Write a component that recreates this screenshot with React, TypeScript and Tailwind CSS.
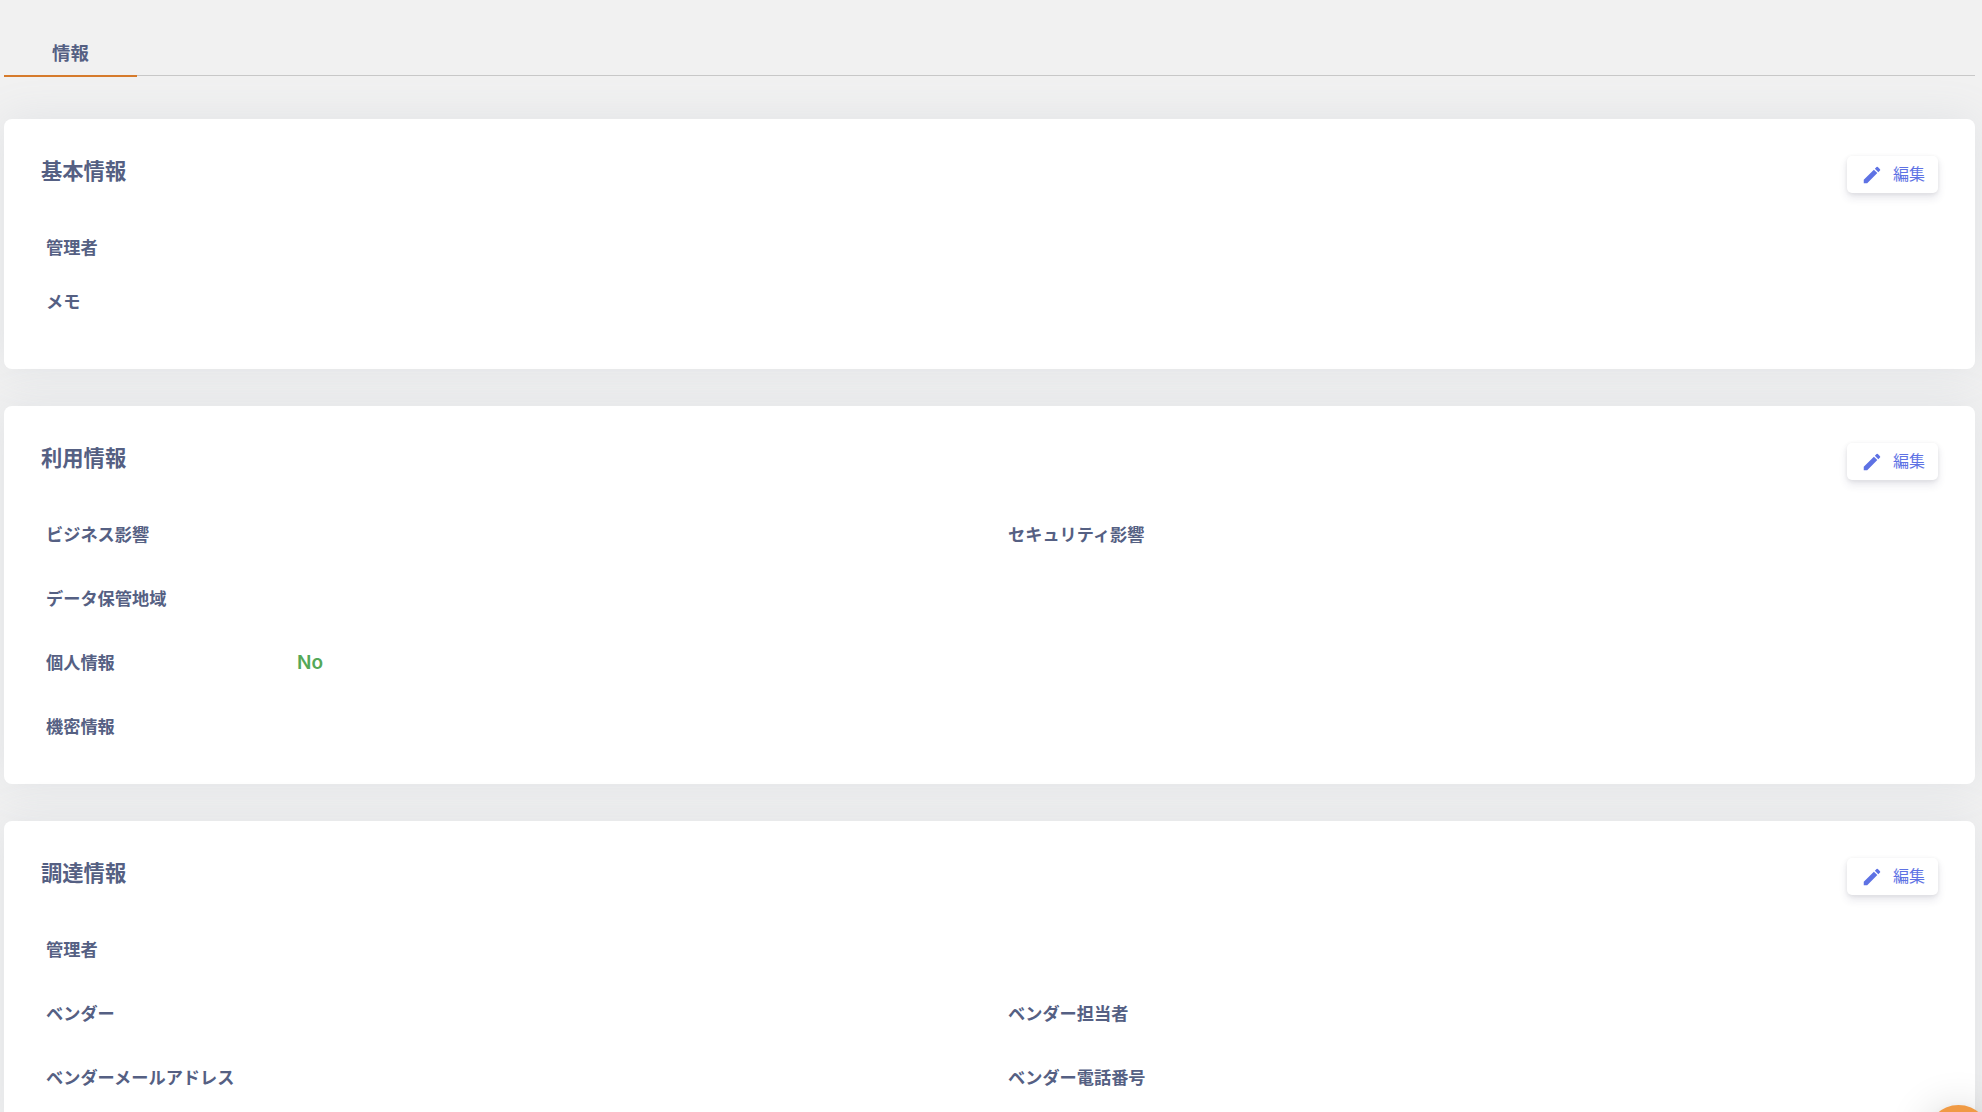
import React, { useState } from "react";
import { MdEdit } from "react-icons/md";

const tabs = [{ id: "info", label: "情報" }];

const sections = [
  {
    id: "basic",
    title: "基本情報",
    compact: true,
    rows: [[{ label: "管理者" }], [{ label: "メモ" }]],
  },
  {
    id: "usage",
    title: "利用情報",
    rows: [
      [{ label: "ビジネス影響" }, { label: "セキュリティ影響" }],
      [{ label: "データ保管地域" }],
      [{ label: "個人情報", value: "No" }],
      [{ label: "機密情報" }],
    ],
  },
  {
    id: "procurement",
    title: "調達情報",
    rows: [
      [{ label: "管理者" }],
      [{ label: "ベンダー" }, { label: "ベンダー担当者" }],
      [{ label: "ベンダーメールアドレス" }, { label: "ベンダー電話番号" }],
    ],
  },
];

function EditButton() {
  return (
    <button className="flex h-[37px] w-[91px] items-center rounded-[5px] bg-white pl-[14px] text-base text-[#5e72e4] shadow-[0_5px_8px_rgba(50,50,93,0.11),0_1px_4px_rgba(0,0,0,0.08)]">
      <MdEdit className="mr-[10px] size-[22px] shrink-0" />
      <span className="leading-none">編集</span>
    </button>
  );
}

function Field({ label, value }: any) {
  return (
    <div className="flex items-center pl-[5px]">
      <span className="w-[251px] text-[17.2px] font-bold">{label}</span>
      {value && <span className="font-[Inter,sans-serif] text-[19px] font-semibold text-[#54a858]">{value}</span>}
    </div>
  );
}

function SectionCard({ section }: any) {
  return (
    <section className="rounded-lg bg-white px-[37px] pt-[37px] pb-[25px] shadow-[0_0_43px_rgba(136,152,170,0.14)]">
      <div className="flex h-[60px] items-start justify-between">
        <h2 className="text-[21.3px] leading-8 font-bold">{section.title}</h2>
        <EditButton />
      </div>
      <div className={section.compact ? "pb-5" : ""}>
        {section.rows.map((row: any, i: number) => (
          <div
            key={i}
            className={`grid grid-cols-[962px_1fr] ${section.compact ? "h-[54px]" : "h-16"} items-start pt-[18px] leading-7`}
          >
            {row.map((field: any) => (
              <Field key={field.label} {...field} />
            ))}
          </div>
        ))}
      </div>
    </section>
  );
}

export default function App() {
  const [activeTab, setActiveTab] = useState("info");

  return (
    <div className="h-[1112px] overflow-hidden bg-[#f1f1f1] pr-[7px] pl-1 font-['Liberation_Sans','Noto_Sans_CJK_JP',sans-serif] text-[#556083]">
      <nav className="flex h-[76px] items-end border-b border-[#c8c8c8]">
        {tabs.map((tab) => (
          <button
            key={tab.id}
            onClick={() => setActiveTab(tab.id)}
            className={`-mb-[2px] h-[43px] w-[133px] border-b-2 pb-px text-[18.4px] leading-10 font-bold ${activeTab === tab.id ? "border-[#d67b2c]" : "border-transparent"}`}
          >
            {tab.label}
          </button>
        ))}
      </nav>

      <main className="mt-[43px] space-y-[37px]">
        {sections.map((section) => (
          <SectionCard key={section.id} section={section} />
        ))}
      </main>

      {/* chat launcher, only its top edge is on screen */}
      <button
        aria-label="chat"
        className="fixed -right-[9px] -bottom-[58px] size-[65px] rounded-full bg-[#f09a44] shadow-[0_1px_8px_rgba(0,0,0,0.06),0_3px_43px_rgba(0,0,0,0.16)]"
      />
    </div>
  );
}
